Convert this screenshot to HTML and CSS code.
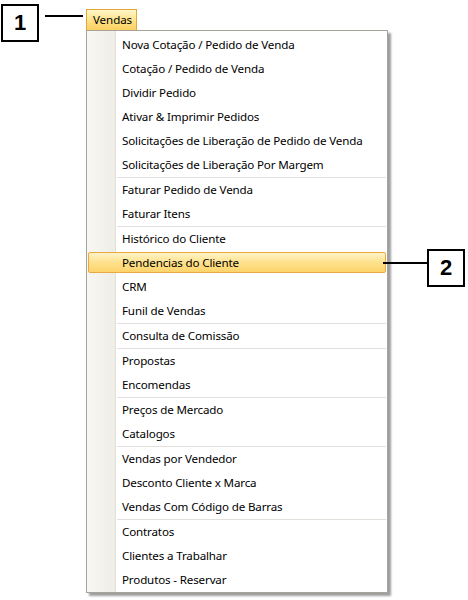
FILE: index.html
```html
<!DOCTYPE html>
<html lang="pt">
<head>
<meta charset="utf-8">
<title>Vendas</title>
<link rel="stylesheet" href="styles.css">
</head>
<body>
<div class="stage">
  <div class="lead-col">
    <div class="callout-box">1</div>
    <div class="leader"></div>
  </div>
  <div class="menu-col">
    <div class="menubar-btn">Vendas</div>
    <div class="menu">
      <div class="gutter"></div>
      <div class="items">
        <div class="item">Nova Cotação / Pedido de Venda</div>
        <div class="item">Cotação / Pedido de Venda</div>
        <div class="item">Dividir Pedido</div>
        <div class="item">Ativar &amp; Imprimir Pedidos</div>
        <div class="item">Solicitações de Liberação de Pedido de Venda</div>
        <div class="item">Solicitações de Liberação Por Margem</div>
        <div class="sep"></div>
        <div class="item">Faturar Pedido de Venda</div>
        <div class="item">Faturar Itens</div>
        <div class="sep"></div>
        <div class="item">Histórico do Cliente</div>
        <div class="item active">Pendencias do Cliente</div>
        <div class="item">CRM</div>
        <div class="item">Funil de Vendas</div>
        <div class="sep"></div>
        <div class="item">Consulta de Comissão</div>
        <div class="sep"></div>
        <div class="item">Propostas</div>
        <div class="item">Encomendas</div>
        <div class="sep"></div>
        <div class="item">Preços de Mercado</div>
        <div class="item">Catalogos</div>
        <div class="sep"></div>
        <div class="item">Vendas por Vendedor</div>
        <div class="item">Desconto Cliente x Marca</div>
        <div class="item">Vendas Com Código de Barras</div>
        <div class="sep"></div>
        <div class="item">Contratos</div>
        <div class="item">Clientes a Trabalhar</div>
        <div class="item">Produtos - Reservar</div>
      </div>
    </div>
  </div>
  <div class="callout2">
    <div class="leader2"></div>
    <div class="callout-box">2</div>
  </div>
</div>
</body>
</html>
```
FILE: styles.css
```css
html, body {
  margin: 0;
  padding: 0;
  background: #ffffff;
}
body {
  font-family: "Noto Sans", "DejaVu Sans", sans-serif;
  color: #000;
}
.stage {
  position: relative;
  width: 468px;
  height: 600px;
  display: flex;
  align-items: flex-start;
}
.lead-col {
  width: 86px;
  display: flex;
  align-items: flex-start;
}
.callout-box {
  box-sizing: border-box;
  width: 38px;
  height: 38px;
  border: 2px solid #000;
  background: #fff;
  display: flex;
  align-items: center;
  justify-content: center;
  font-family: "Liberation Sans", Arial, sans-serif;
  font-weight: bold;
  font-size: 22px;
}
.lead-col .callout-box {
  margin-top: 4px;
  margin-left: 1px;
}
.leader {
  width: 38px;
  height: 2px;
  background: #000;
  margin-top: 15px;
  margin-left: 6px;
}
.menu-col {
  display: flex;
  flex-direction: column;
  align-items: flex-start;
}
.menubar-btn {
  box-sizing: border-box;
  margin-top: 9px;
  width: 51px;
  height: 21px;
  border: 1px solid #e3a53e;
  border-bottom: none;
  background: linear-gradient(#fff6c8, #fde184 55%, #fbd060);
  font-size: 11.6px;
  letter-spacing: -0.1px;
  line-height: 19px;
  padding-left: 6px;
}
.menu {
  box-sizing: border-box;
  width: 302px;
  height: 563px;
  border: 1px solid #a7a39a;
  background: #fff;
  display: flex;
  position: relative;
  box-shadow: 3px 3px 2px rgba(0, 0, 0, 0.38);
}
.gutter {
  position: absolute;
  left: 0;
  top: 0;
  bottom: 0;
  width: 28px;
  background: linear-gradient(to right, #f8f7f3, #efede6);
  border-right: 1px solid #e3e0d8;
}
.items {
  position: relative;
  flex: 1;
  padding-top: 2px;
  display: flex;
  flex-direction: column;
}
.item {
  box-sizing: border-box;
  height: 24px;
  line-height: 23px;
  font-size: 11.6px;
  letter-spacing: -0.15px;
  padding-left: 34px;
  margin: 0 1px;
  white-space: nowrap;
}
.item.active {
  height: 21px;
  line-height: 19px;
  margin: 1px 1px 2px 1px;
  padding-left: 33px;
  border: 1px solid #eba843;
  border-radius: 2px;
  background: linear-gradient(#fff4c9, #fee18c 50%, #fcd36c);
}
.sep {
  height: 1px;
  margin-left: 30px;
  margin-right: 1px;
  background: #e2e0da;
}
.callout2 {
  position: absolute;
  left: 383px;
  top: 249px;
  display: flex;
  align-items: flex-start;
}
.leader2 {
  width: 44px;
  height: 2px;
  margin-top: 13px;
  background: #000;
}
```
